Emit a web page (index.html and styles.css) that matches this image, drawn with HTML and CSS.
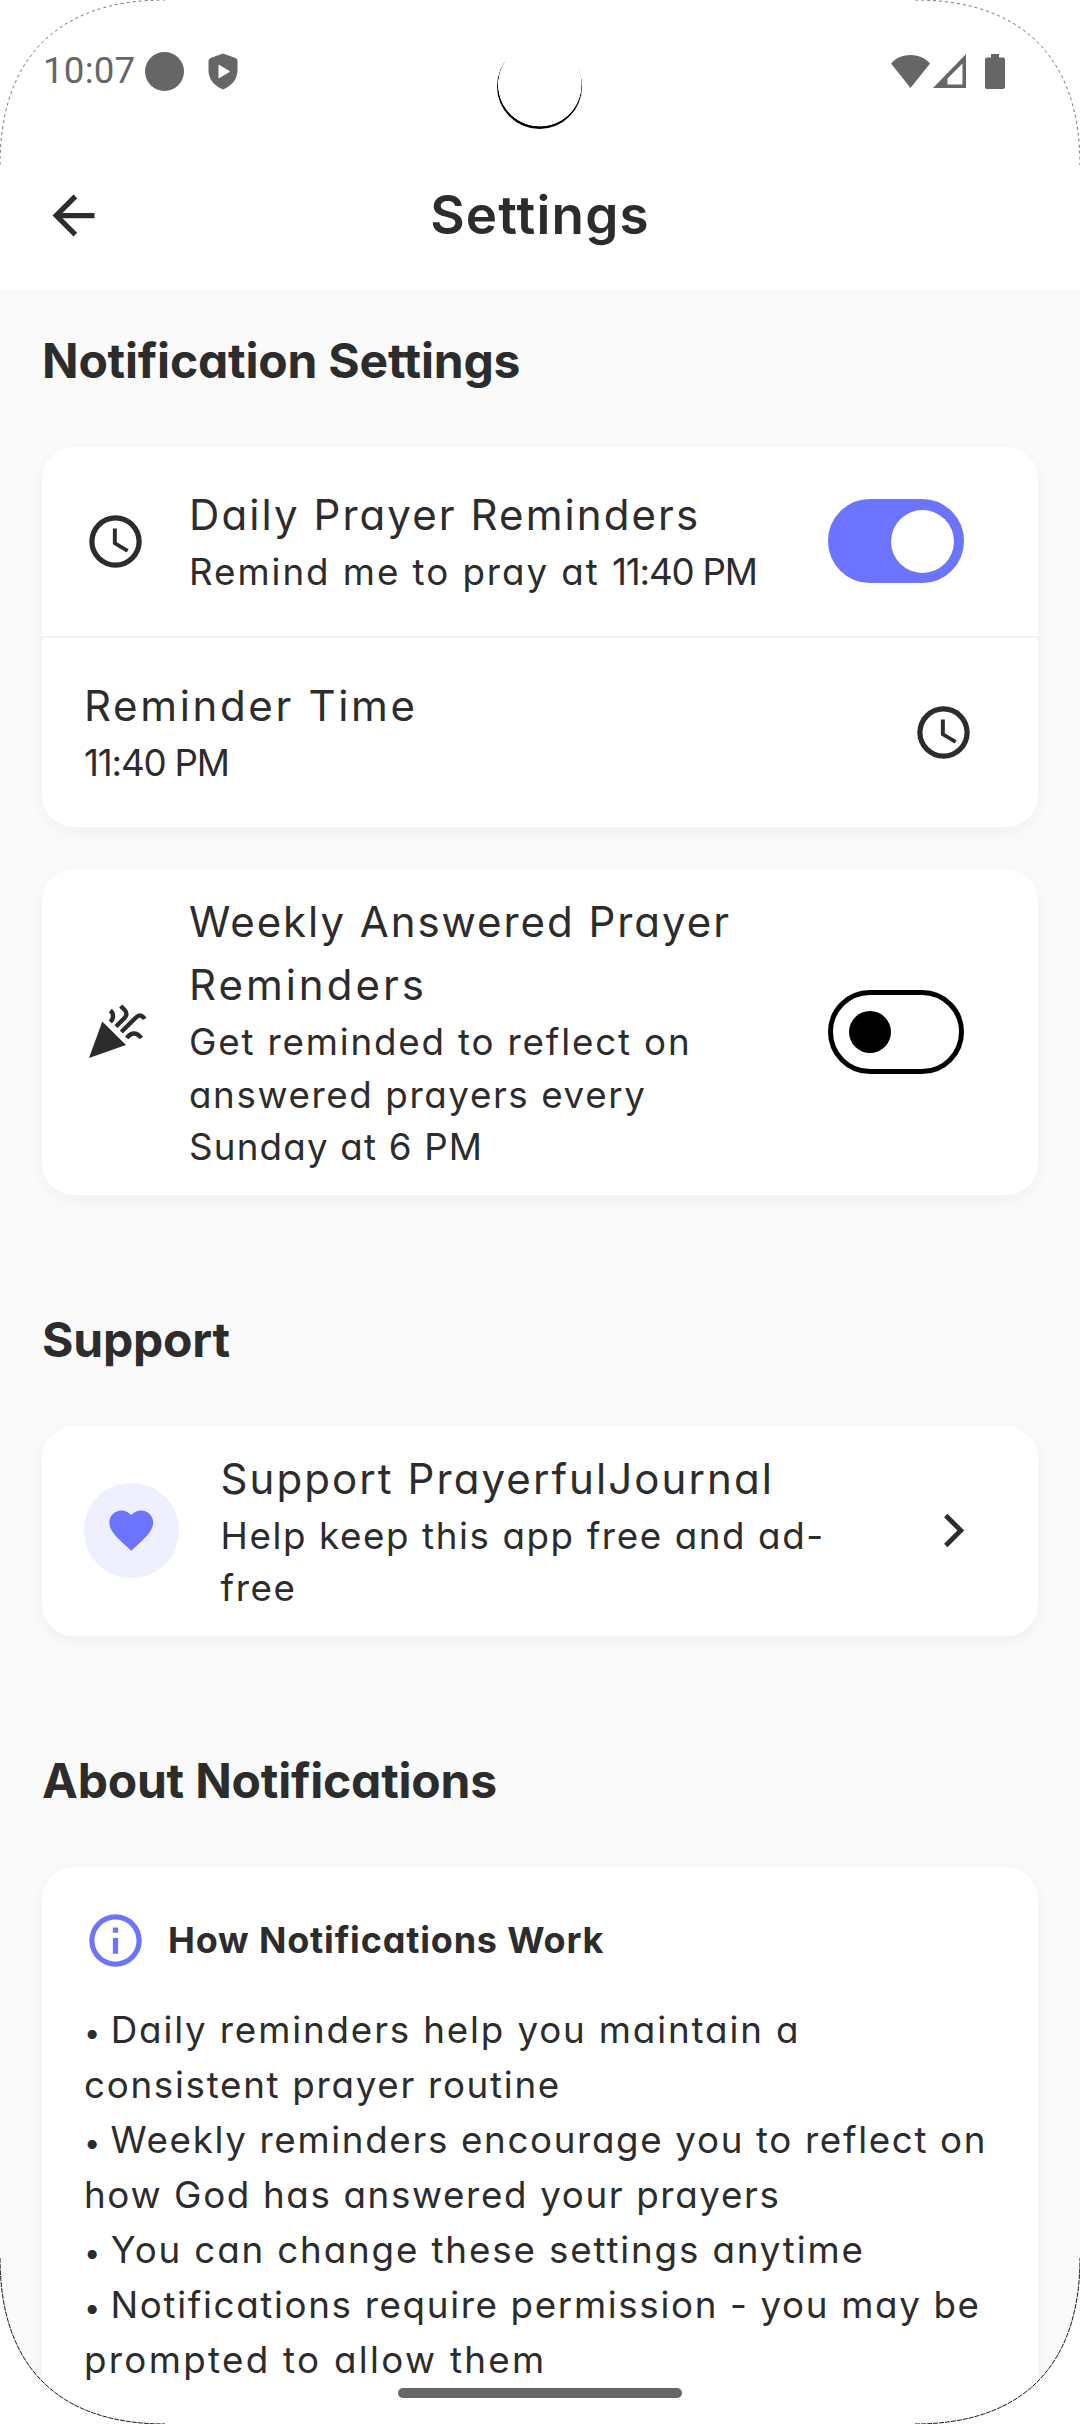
FILE: index.html
```
<!DOCTYPE html>
<html lang="en">
<head>
<meta charset="utf-8">
<title>Settings</title>
<link rel="stylesheet" href="styles.css">
</head>
<body>
<svg class="defs" width="0" height="0">
  <symbol id="clock" viewBox="0 0 24 24"><path d="M12,20A8,8 0 0,0 20,12A8,8 0 0,0 12,4A8,8 0 0,0 4,12A8,8 0 0,0 12,20M12,2A10,10 0 0,1 22,12A10,10 0 0,1 12,22A10,10 0 0,1 2,12A10,10 0 0,1 12,2M12.5,7V12.25L17,14.92L16.25,16.15L11,13V7H12.5Z"/></symbol>
</svg>
<div class="screen">
  <header class="status-bar">
    <div class="status-left">
      <span class="clock-text">10:07</span>
      <span class="status-dot"></span>
      <svg class="shield" viewBox="0 0 30 36"><path fill-rule="evenodd" d="M15 0L27.500 4.500Q29.500 5.300 29.500 7.500V16.500C29.500 26 23.500 32.500 15 36C6.500 32.500 .5 26 .5 16.500V7.500Q.5 5.300 2.500 4.500ZM10.500 11.500V24.500Q10.500 25 11 24.700L21.500 18.400Q22 18 21.500 17.600L11 11.200Q10.500 11 10.500 11.500Z"/></svg>
    </div>
    <div class="status-right">
      <svg class="wifi" viewBox="0 0 39 34"><path d="M0 9.500C10 -1.800 29 -1.800 39 9.500L19.500 34Z"/></svg>
      <svg class="signal" viewBox="0 0 33 34"><path fill-rule="evenodd" d="M33 0V34H0ZM29.500 9.500L14.500 24.500V30.500H29.500Z"/></svg>
      <svg class="battery" viewBox="0 0 20 35"><path d="M6 0H14V3.500H18Q20 3.500 20 5.500V33Q20 35 18 35H2Q0 35 0 33V5.500Q0 3.500 2 3.500H6Z"/></svg>
    </div>
  </header>

  <div class="app-bar">
    <svg class="icon" viewBox="0 0 24 24"><path d="M20 11H7.830L13.420 5.410L12 4L4 12L12 20L13.410 18.590L7.830 13H20V11Z"/></svg>
    <h1 class="page-title">Settings</h1>
    <span class="icon"></span>
  </div>

  <main class="content">
    <section class="section">
      <h2 class="heading">Notification Settings</h2>
      <div class="card">
        <div class="row row-daily">
          <svg class="icon"><use href="#clock"/></svg>
          <div class="labels">
            <div class="title">Daily Prayer Reminders</div>
            <div class="sub sub-daily">Remind me to pray at <span class="time">11:40 PM</span></div>
          </div>
          <span class="switch on"><span class="thumb"></span></span>
        </div>
        <div class="row row-time">
          <div class="labels">
            <div class="title title-time">Reminder Time</div>
            <div class="sub"><span class="time">11:40 PM</span></div>
          </div>
          <svg class="icon"><use href="#clock"/></svg>
        </div>
      </div>
      <div class="card">
        <div class="row row-weekly">
          <svg class="icon" viewBox="0 0 63 63">
            <path d="M5 57L18.300 20.500L42 44Z"/>
            <path class="streamers" d="M26.300 9.500C30 12.500 30 17.500 26.300 21M36.700 5L40.500 8.800C43 11.300 43 14.500 40.500 17L32 25.500M37.300 31L52 16.500C55 13.500 58.500 14 60.500 18M42.700 37C47.500 31 52.500 31 57.300 37"/>
          </svg>
          <div class="labels">
            <div class="title title-weekly">Weekly Answered Prayer<br><span class="w-reminders">Reminders</span></div>
            <div class="sub"><span class="w-get">Get reminded to reflect on</span><br><span class="w-answered">answered prayers every</span><br><span class="w-sunday">Sunday at 6 PM</span></div>
          </div>
          <span class="switch"><span class="thumb"></span></span>
        </div>
      </div>
    </section>

    <section class="section">
      <h2 class="heading">Support</h2>
      <div class="card">
        <div class="row row-support">
          <span class="avatar"><svg class="heart" viewBox="0 0 24 24"><path d="M12,21.350L10.550,20.030C5.400,15.360 2,12.270 2,8.500C2,5.410 4.420,3 7.500,3C9.240,3 10.910,3.810 12,5.080C13.090,3.810 14.760,3 16.500,3C19.580,3 22,5.410 22,8.500C22,12.270 18.600,15.360 13.450,20.030L12,21.350Z"/></svg></span>
          <div class="labels">
            <div class="title">Support PrayerfulJournal</div>
            <div class="sub">Help keep this app free and ad-<br>free</div>
          </div>
          <svg class="icon chevron" viewBox="0 0 63 63"><path d="M33.800 16.500L48.800 31.500L33.800 46.500"/></svg>
        </div>
      </div>
    </section>

    <section class="section">
      <h2 class="heading heading-about">About Notifications</h2>
      <div class="card about">
        <div class="about-head">
          <svg class="icon info" viewBox="0 0 24 24"><path d="M11,9H13V7H11M12,20C7.590,20 4,16.410 4,12C4,7.590 7.590,4 12,4C16.410,4 20,7.590 20,12C20,16.410 16.410,20 12,20M12,2A10,10 0 0,0 2,12A10,10 0 0,0 12,22A10,10 0 0,0 22,12A10,10 0 0,0 12,2M11,17H13V11H11V17Z"/></svg>
          <h3 class="about-title">How Notifications Work</h3>
        </div>
        <p class="about-text"><span class="bullet">•</span> Daily reminders help you maintain a<br><span class="w-consistent">consistent prayer routine</span><br><span class="w-weekly"><span class="bullet">•</span> Weekly reminders encourage you to reflect on</span><br><span class="w-how">how God has answered your prayers</span><br><span class="bullet">•</span> You can change these settings anytime<br><span class="w-weekly"><span class="bullet">•</span> Notifications require permission - you may be</span><br><span class="w-prompted">prompted to allow them</span></p>
      </div>
    </section>
  </main>

  <span class="camera"></span>
  <span class="home-bar"></span>
  <svg class="frame" viewBox="0 0 1080 2424">
    <path class="corner" d="M0 2424V2258C0 2366 58 2424 165 2424ZM1080 2424V2258C1080 2366 1022 2424 915 2424Z"/>
    <path class="edge edge-top" d="M0 165C0 58 58 0 165 0M915 0C1022 0 1080 58 1080 165"/>
    <path class="edge" d="M0 2258C0 2366 58 2424 165 2424M915 2424C1022 2424 1080 2366 1080 2258"/>
  </svg>
</div>
</body>
</html>
```
FILE: styles.css
```
* { box-sizing: border-box; }
body {
  margin: 0;
  background: #fff;
  color: #2c2c2c;
  font-family: Inter, "Noto Sans", sans-serif;
  font-feature-settings: "cv11";
}
h1, h2, h3, p { margin: 0; font-weight: 600; }
.defs { position: absolute; }
.screen {
  position: relative;
  display: flex;
  flex-direction: column;
  width: 1080px;
  height: 2424px;
  overflow: hidden;
}

/* Status bar */
.status-bar {
  display: flex;
  justify-content: space-between;
  height: 142px;
  padding: 0 75px 0 43px;
  fill: #666;
  color: #666;
}
.status-left, .status-right { display: flex; align-items: center; height: 142px; }
.clock-text {
  width: 102px;
  font: 400 36.7px/40px Roboto, sans-serif;
  letter-spacing: .2px;
  font-feature-settings: normal;
}
.status-dot { width: 39px; height: 39px; border-radius: 50%; background: #666; }
.shield { width: 30px; height: 37px; margin-left: 24px; }
.wifi { width: 39px; height: 34px; }
.signal { width: 33px; height: 34px; margin-left: 3px; }
.battery { width: 20px; height: 35px; margin-left: 19px; }

/* App bar */
.app-bar {
  display: flex;
  flex: none;
  align-items: center;
  justify-content: space-between;
  height: 147px;
  padding: 0 42px;
}
.icon { flex: none; width: 63px; height: 63px; fill: #2c2c2c; }
.page-title { padding-bottom: 2px; font-size: 53px; line-height: 76px; letter-spacing: 1.2px; }

/* Content */
.content { flex: 1; padding: 42px 42px 0; background: #fafafa; min-height: 0; }
.section { display: flex; flex-direction: column; gap: 42px; margin-bottom: 114.5px; }
.heading { margin-bottom: 14px; font-size: 48px; font-weight: 650; line-height: 60px; letter-spacing: -.2px; }
.heading-about { padding-top: 1px; }
.card {
  border-radius: 31.5px;
  background: #fff;
  box-shadow: 0 5px 16px rgba(0, 0, 0, .045);
}
.row { display: flex; align-items: center; gap: 42px; padding: 0 63px 0 42px; }
.row-daily { height: 191px; padding-right: 74px; border-bottom: 2px solid #f4f4f4; }
.row-time { height: 189px; }
.row-weekly { height: 326px; padding-right: 74px; }
.row-support { height: 210px; }
.labels { flex: 1; min-width: 0; white-space: nowrap; }
.title { font-size: 42px; line-height: 63px; letter-spacing: 2.08px; }
.title-time { letter-spacing: 2.66px; }
.title-weekly { letter-spacing: 1.95px; }
.w-reminders { letter-spacing: 3px; }
.sub { font-size: 36.75px; line-height: 52.5px; letter-spacing: 1.6px; }
.row-daily .labels, .row-time .labels { margin-top: -1px; }
.sub-daily { letter-spacing: 1.94px; }
.time { letter-spacing: -1.2px; }
.w-get { letter-spacing: 1.82px; }
.w-answered { letter-spacing: 1.6px; }
.w-sunday { letter-spacing: 1.18px; }

.streamers { fill: none; stroke: #2c2c2c; stroke-width: 4.4px; }
.chevron path { fill: none; stroke: #2c2c2c; stroke-width: 4.8px; }
.avatar {
  display: flex;
  flex: none;
  align-items: center;
  justify-content: center;
  width: 94.5px;
  height: 94.5px;
  border-radius: 50%;
  background: #eef0ff;
}
.heart { width: 52.5px; height: 52.5px; fill: #6c73ff; }
.switch {
  display: flex;
  flex: none;
  align-items: center;
  width: 136px;
  height: 84px;
  padding-left: 16px;
  border: 5.25px solid #000;
  border-radius: 42px;
}
.thumb { width: 42px; height: 42px; border-radius: 50%; background: #000; }
.switch.on {
  justify-content: flex-end;
  margin-bottom: 1px;
  padding: 0 5px 0 0;
  border-color: #6c73ff;
  background: #6c73ff;
}
.on .thumb { width: 63px; height: 63px; background: #fff; }

/* About card */
.about { height: 640px; padding: 42px; }
.about-head { display: flex; align-items: center; gap: 21px; }
.info { fill: #6c73ff; }
.about-title { font-size: 36px; font-weight: 650; line-height: 52px; letter-spacing: .82px; padding-bottom: 2px; }
.about-text {
  margin-top: 29.5px;
  font-size: 36.75px;
  font-weight: 400;
  line-height: 55.1px;
  letter-spacing: 1.85px;
  white-space: nowrap;
}
.bullet { font-size: 29px; letter-spacing: -1.8px; line-height: 1; }
.w-consistent { letter-spacing: 1.7px; }
.w-weekly { letter-spacing: 1.65px; }
.w-how { letter-spacing: 1.64px; }
.w-prompted { letter-spacing: 2.3px; }

/* Device overlays */
.camera {
  position: absolute;
  left: 497px;
  top: 44px;
  width: 85px;
  height: 85px;
  border-radius: 50%;
  background: radial-gradient(circle at 42.800px 40.700px, #fff 41.400px, #000 42px);
}
.home-bar {
  position: absolute;
  left: 398px;
  top: 2388px;
  width: 284px;
  height: 10px;
  border-radius: 5px;
  background: #666;
}
.frame { position: absolute; inset: 0; width: 1080px; height: 2424px; }
.corner { fill: #fff; }
.edge { fill: none; stroke: #000; stroke-width: .9px; stroke-dasharray: 5 1; }
.edge-top { stroke: #555; stroke-width: .8px; stroke-dasharray: 3 3; }
```
